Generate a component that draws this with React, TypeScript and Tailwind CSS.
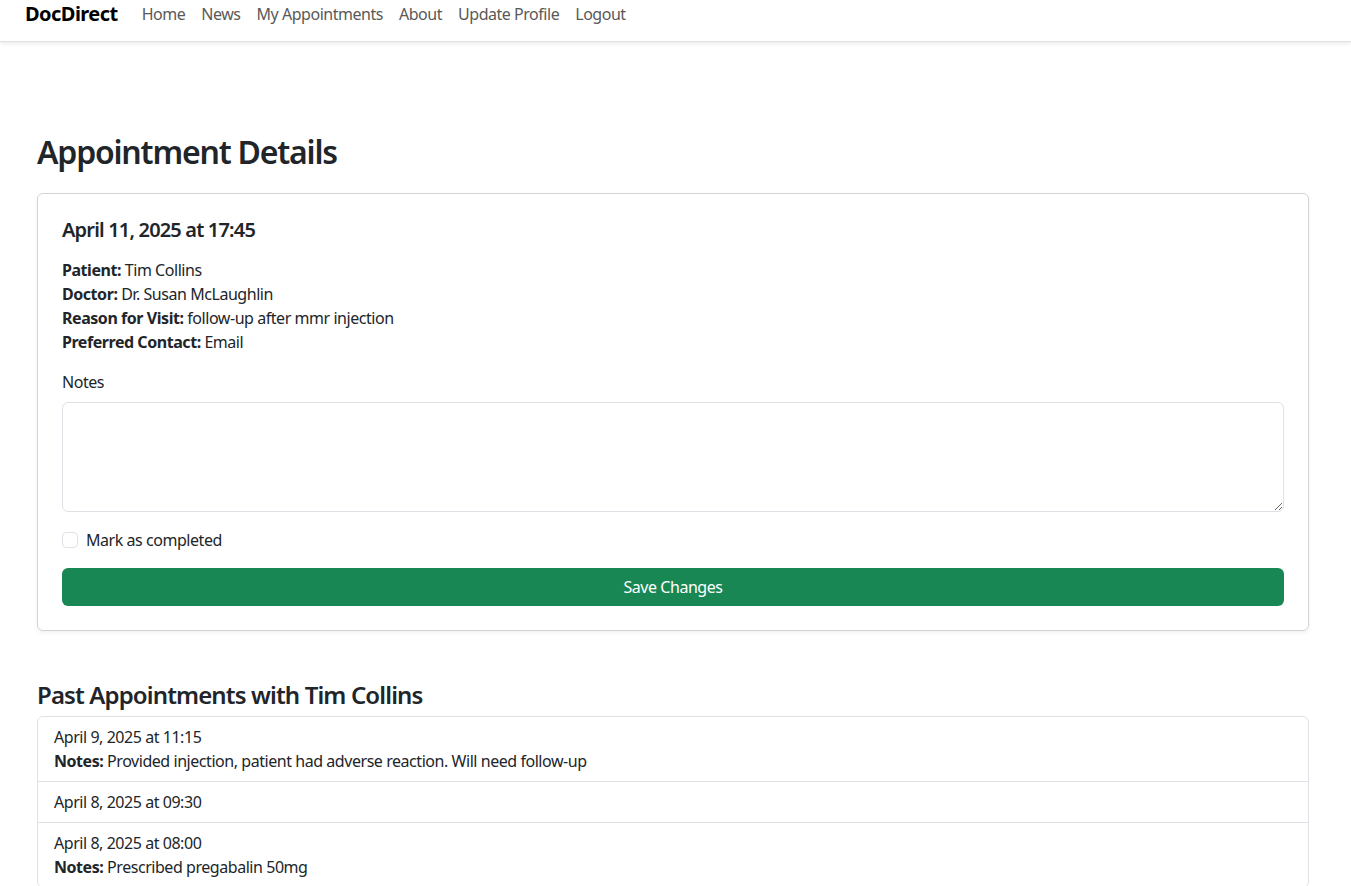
const NAV_LINKS = ['Home', 'News', 'My Appointments', 'About', 'Update Profile', 'Logout']

const PAST = [
  { when: 'April 9, 2025 at 11:15', notes: 'Provided injection, patient had adverse reaction. Will need follow-up' },
  { when: 'April 8, 2025 at 09:30', notes: '' },
  { when: 'April 8, 2025 at 08:00', notes: 'Prescribed pregabalin 50mg' },
]

function NavBar() {
  return (
    <nav className="h-[42px] bg-white shadow-[0_2px_4px_rgba(0,0,0,0.08)] border-b border-[#e2e2e2]">
      <div className="flex items-center h-[28px] pl-[25px]">
        <span className="text-[20px] font-bold text-black mr-[16px] tracking-[-0.55px]">DocDirect</span>
        {NAV_LINKS.map((l) => (
          <a key={l} className="px-[8px] text-[16px] text-[#595959] tracking-[-0.47px]">
            {l}
          </a>
        ))}
      </div>
    </nav>
  )
}

function Field({ label, value }: { label: string; value: string }) {
  return (
    <div>
      <span className="font-bold">{label}:</span> {value}
    </div>
  )
}

export default function App() {
  return (
    <div className="min-h-screen bg-white text-[#212529] text-[16px] leading-[24px] tracking-[-0.45px] font-['Noto_Sans','Open_Sans',sans-serif]">
      <NavBar />
      <main className="w-[1272px] ml-[37px] pt-[86px] pb-10">
        <h1 className="text-[32px] leading-[48px] font-semibold tracking-[-1.2px] mb-[17px]">
          Appointment Details
        </h1>

        <section className="border border-[#d3d4d5] rounded-[6px] shadow-[0_2px_4px_rgba(0,0,0,0.06)] p-[24px]">
          <h5 className="text-[20px] leading-[24px] font-semibold tracking-[-0.83px] mb-[16px]">
            April 11, 2025 at 17:45
          </h5>
          <div className="mb-[16px]">
            <Field label="Patient" value="Tim Collins" />
            <Field label="Doctor" value="Dr. Susan McLaughlin" />
            <Field label="Reason for Visit" value="follow-up after mmr injection" />
            <Field label="Preferred Contact" value="Email" />
          </div>
          <label className="block mb-[8px]">Notes</label>
          <textarea className="block w-full h-[110px] border border-[#dee2e6] rounded-[6px] mb-[16px] px-3 py-1.5 outline-none" />
          <label className="flex items-center gap-[8px] mb-[16px]">
            <span className="w-[16px] h-[16px] border border-[#dee2e6] rounded-[4px] bg-white" />
            <span>Mark as completed</span>
          </label>
          <button
            type="button"
            className="w-full h-[38px] rounded-[6px] bg-[#198754] text-white text-[16px] tracking-[-0.45px]"
          >
            Save Changes
          </button>
        </section>

        <h4 className="text-[24px] leading-[29px] font-semibold tracking-[-0.87px] mt-[49px] mb-[7px]">
          Past Appointments with Tim Collins
        </h4>
        <ul className="border border-[#dee2e6] rounded-[6px]">
          {PAST.map((p, i) => (
            <li key={i} className={`px-[16px] py-[8px] ${i > 0 ? 'border-t border-[#dee2e6]' : ''}`}>
              <div>{p.when}</div>
              {p.notes && (
                <div>
                  <span className="font-bold">Notes:</span> {p.notes}
                </div>
              )}
            </li>
          ))}
        </ul>
      </main>
    </div>
  )
}
